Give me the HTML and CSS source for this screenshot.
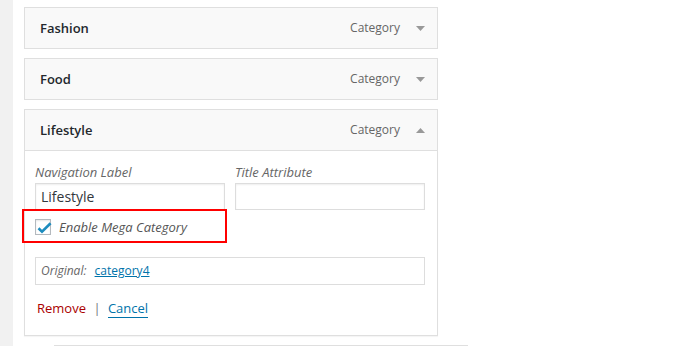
FILE: index.html
```html
<!DOCTYPE html>
<html lang="en">
<head>
  <meta charset="UTF-8" />
  <title>Menu Structure</title>
  <link rel="stylesheet" href="styles.css">
</head>
<body>
  <div class="sidebar"></div>

  <ul class="menu">
    <li class="menu-item">
      <div class="item-bar">
        <span class="item-title">Fashion</span>
        <span class="item-type">Category</span>
        <svg class="item-arrow" width="9" height="5" viewBox="0 0 9 5"><path d="M0 0H9L4.5 5Z" /></svg>
      </div>
    </li>

    <li class="menu-item">
      <div class="item-bar">
        <span class="item-title">Food</span>
        <span class="item-type">Category</span>
        <svg class="item-arrow" width="9" height="5" viewBox="0 0 9 5"><path d="M0 0H9L4.5 5Z" /></svg>
      </div>
    </li>

    <li class="menu-item">
      <div class="item-bar">
        <span class="item-title">Lifestyle</span>
        <span class="item-type">Category</span>
        <svg class="item-arrow" width="9" height="5" viewBox="0 0 9 5"><path d="M0 5H9L4.5 0Z" /></svg>
      </div>
      <div class="item-settings">
        <div class="field-row">
          <label class="field">
            <span class="description">Navigation Label</span>
            <input type="text" class="field-input" value="Lifestyle" />
          </label>
          <label class="field">
            <span class="description">Title Attribute</span>
            <input type="text" class="field-input" value="" />
          </label>
        </div>

        <label class="mega-option">
          <span class="checkbox">
            <svg width="16" height="16" viewBox="0 0 16 16"><path d="M2.5 8.2L6 11.6L14.6 3.2" /></svg>
          </span>
          <span class="mega-label">Enable Mega Category</span>
        </label>

        <div class="link-to-original">
          Original: <a href="#">category4</a>
        </div>

        <div class="item-actions">
          <a href="#" class="item-delete">Remove</a>
          <span class="sep">|</span>
          <a href="#" class="item-cancel">Cancel</a>
        </div>

        <!-- annotation around the checkbox -->
        <div class="highlight"></div>
      </div>
    </li>

    <li class="menu-item sub-item">
      <div class="item-bar"></div>
    </li>
  </ul>
</body>
</html>
```

FILE: styles.css
```css
body {
  margin: 0;
  height: 346px;
  display: flex;
  font-family: "Open Sans", "Liberation Sans", sans-serif;
  font-size: 13px;
  color: #444;
  background: #fff;
  overflow: hidden;
}
.sidebar {
  width: 13px;
  background-color: #f1f1f1;
  flex-shrink: 0;
}
.menu {
  list-style: none;
  margin: 0;
  padding: 7px 0 0 11px;
  height: 339px;
  overflow: hidden;
}
.menu-item {
  width: 414px;
  margin-bottom: 9px;
}
.item-bar {
  display: flex;
  align-items: center;
  height: 20px;
  padding: 10px 12px 10px 15px;
  border: 1px solid #dfdfdf;
  background-color: #f9f9f9;
  line-height: 20px;
}
.item-title {
  flex: 1;
  font-weight: 600;
  color: #23282d;
}
.item-type {
  font-size: 12px;
  color: #666;
  margin-right: 1px;
}
.item-arrow {
  margin-left: 15px;
  fill: #999;
}
.item-settings {
  position: relative;
  padding: 11px 12px 17px 10px;
  border: 1px solid #dfdfdf;
  border-top: none;
  box-shadow: 0 1px 1px rgba(0,0,0,0.04);
}
.field-row {
  display: flex;
  gap: 10px;
}
.field {
  display: flex;
  flex-direction: column;
  width: 190px;
}
.description {
  font-style: italic;
  color: #666;
  line-height: 20px;
}
.field-input {
  box-sizing: border-box;
  width: 190px;
  height: 27px;
  margin: 1px 0 0;
  padding: 2px 5px;
  border: 1px solid #ddd;
  box-shadow: inset 0 1px 2px rgba(0,0,0,0.07);
  font-family: "Open Sans", "Liberation Sans", sans-serif;
  font-size: 14px;
  color: #32373c;
  outline: none;
}
.mega-option {
  display: flex;
  align-items: center;
  margin-top: 9px;
  height: 16px;
}
.checkbox {
  box-sizing: border-box;
  width: 16px;
  height: 16px;
  border: 1px solid #b4b9be;
  background: #fff;
  box-shadow: inset 0 1px 2px rgba(0,0,0,0.1);
  position: relative;
}
.checkbox svg {
  position: absolute;
  left: 0;
  top: 0;
  fill: none;
  stroke: #1e8cbe;
  stroke-width: 2.6;
}
.mega-label {
  margin-left: 8px;
  font-style: italic;
  color: #555;
  line-height: 20px;
}
.link-to-original {
  box-sizing: border-box;
  height: 28px;
  margin-top: 22px;
  padding: 3px 5px;
  border: 1px solid #ddd;
  font-size: 12px;
  font-style: italic;
  color: #666;
  line-height: 20px;
}
.link-to-original a {
  margin-left: 5px;
  font-style: normal;
  color: #0073aa;
  text-decoration: underline;
}
.item-actions {
  margin-top: 13px;
  padding-left: 2px;
  line-height: 20px;
}
.item-delete {
  color: #a00;
  text-decoration: none;
}
.sep {
  margin: 0 4px;
  color: #72777c;
}
.item-cancel {
  color: #0073aa;
  text-decoration: none;
  border-bottom: 1px solid #0073aa;
}
.highlight {
  position: absolute;
  left: -3px;
  top: 58px;
  width: 201px;
  height: 30px;
  border: 2px solid #f00;
}
.sub-item {
  margin-left: 30px;
}
.sub-item .item-bar {
  border-bottom: none;
}
```
